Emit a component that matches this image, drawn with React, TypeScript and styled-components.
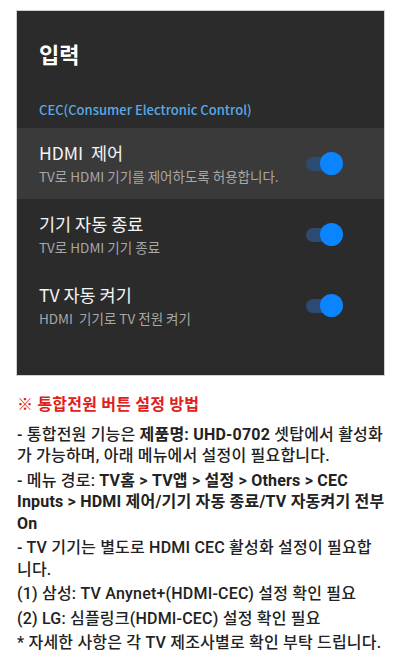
import React from "react";
import styled, { createGlobalStyle } from "styled-components";

const Global = createGlobalStyle`
  html, body { margin: 0; padding: 0; background: #ffffff; }
  body { font-family: Roboto, "Noto Sans CJK KR", sans-serif; }
`;

const Page = styled.div`
  padding: 10px 16px 0 16px;
`;

const Panel = styled.section`
  background: #2b2b2b;
  border: 1px solid #d0d0d0;
  height: 366px;
  box-sizing: border-box;
  padding-top: 26px;
  font-family: "Noto Sans CJK KR", sans-serif;
`;

const Title = styled.h1`
  margin: 0 0 0 22px;
  font-size: 22px;
  line-height: 32px;
  font-weight: 700;
  color: #ffffff;
`;

const Section = styled.div`
  margin: 32px 0 0 22px;
  font-size: 13px;
  line-height: 18px;
  font-weight: 500;
  color: #5aa9e6;
  height: 27px;
`;

const Row = styled.div<{ $focused?: boolean }>`
  display: flex;
  align-items: center;
  justify-content: space-between;
  height: 71px;
  padding: 0 41px 0 22px;
  background: ${(p) => (p.$focused ? "#3a3a3a" : "transparent")};
`;

const RowText = styled.div`
  display: flex;
  flex-direction: column;
  gap: 2px;
  white-space: pre;
`;

const RowTitle = styled.div`
  font-size: 17.5px;
  line-height: 22px;
  font-weight: 400;
  color: #f4f4f4;
`;

const RowSub = styled.div`
  font-size: 13.5px;
  line-height: 20px;
  color: #a8a8a8;
`;

const Toggle = styled.div`
  position: relative;
  width: 37px;
  height: 24px;
  flex: none;
`;

const Track = styled.div`
  position: absolute;
  left: 0;
  top: 5px;
  width: 30px;
  height: 14px;
  border-radius: 7px;
  background: #2d4b72;
`;

const Knob = styled.div`
  position: absolute;
  right: 0;
  top: 0;
  width: 23px;
  height: 23px;
  border-radius: 50%;
  background: #0a84ff;
`;

const Notes = styled.div`
  padding: 18px 16px 0 17px;
  font-family: Roboto, "Noto Sans CJK KR", sans-serif;
  color: #222222;
  font-size: 16px;
  line-height: 21.5px;
  letter-spacing: 0.2px;
`;

const Heading = styled.p`
  margin: 0 0 8px 0;
  color: #e0201b;
  font-weight: 700;
`;

const Para = styled.p`
  margin: 0 0 3px 0;
  font-weight: 500;
  b { font-weight: 700; }
`;

const rows = [
  { title: "HDMI  제어", sub: "TV로 HDMI 기기를 제어하도록 허용합니다.", focused: true },
  { title: "기기 자동 종료", sub: "TV로 HDMI 기기 종료" },
  { title: "TV 자동 켜기", sub: "HDMI  기기로 TV 전원 켜기" },
];

export default function App() {
  return (
    <>
      <Global />
      <Page>
        <Panel>
          <Title>입력</Title>
          <Section>CEC(Consumer Electronic Control)</Section>
          {rows.map((r) => (
            <Row key={r.title} $focused={r.focused}>
              <RowText>
                <RowTitle>{r.title}</RowTitle>
                <RowSub>{r.sub}</RowSub>
              </RowText>
              <Toggle>
                <Track />
                <Knob />
              </Toggle>
            </Row>
          ))}
        </Panel>
      </Page>
      <Notes>
        <Heading>※ 통합전원 버튼 설정 방법</Heading>
        <Para>
          - 통합전원 기능은 <b>제품명: UHD-0702</b> 셋탑에서 활성화가 가능하며, 아래 메뉴에서 설정이 필요합니다.
        </Para>
        <Para>
          - 메뉴 경로: <b>TV홈 &gt; TV앱 &gt; 설정 &gt; Others &gt; CEC Inputs &gt; HDMI 제어/기기 자동 종료/TV 자동켜기 전부 On</b>
        </Para>
        <Para>- TV 기기는 별도로 HDMI CEC 활성화 설정이 필요합니다.</Para>
        <Para>(1) 삼성: TV Anynet+(HDMI-CEC) 설정 확인 필요</Para>
        <Para>(2) LG: 심플링크(HDMI-CEC) 설정 확인 필요</Para>
        <Para>* 자세한 사항은 각 TV 제조사별로 확인 부탁 드립니다.</Para>
      </Notes>
    </>
  );
}
